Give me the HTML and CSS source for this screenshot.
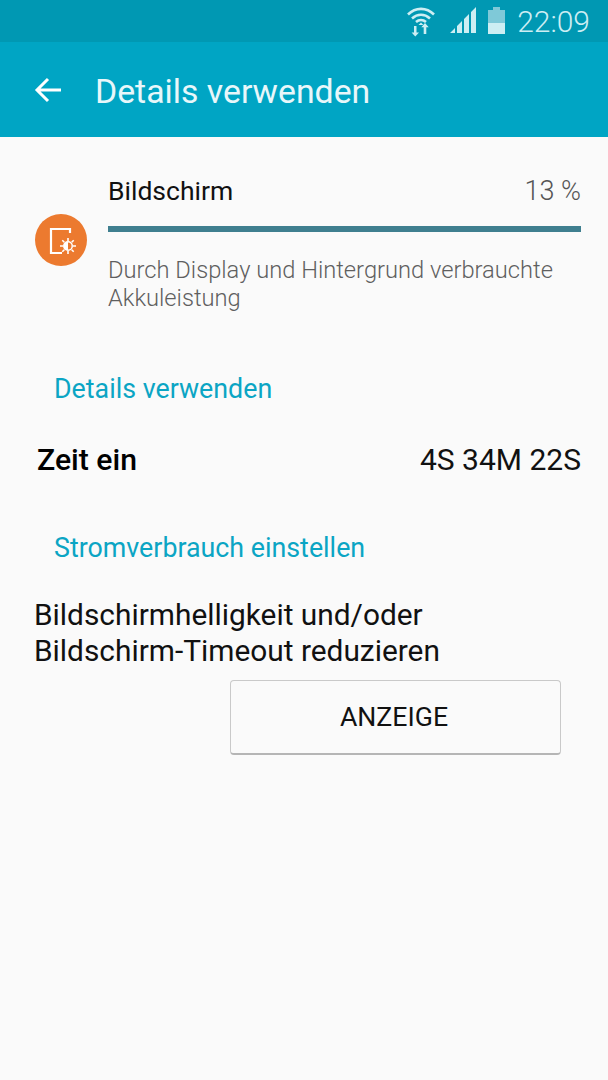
FILE: index.html
```html
<!DOCTYPE html>
<html>
<head>
  <meta charset="UTF-8">
  <link rel="stylesheet" href="styles.css">
</head>
<body>
  <div class="status-bar">
    <svg class="wifi" width="30" height="34" viewBox="0 0 30 34">
      <path d="M2 11.500C9.500 4 20.500 4 28 11.500M6 15.500C11.500 10.500 18.500 10.500 24 15.500M10 19C13 16.500 17 16.500 20 19" fill="none" stroke="#cdeef3" stroke-width="2.600"/>
      <path d="M15 19.500l2.500 2.500h-5z" fill="#cdeef3"/>
      <path d="M10.500 23v6.500h2.500l-3.700 4-3.700-4h2.400V23zM19 20l3.700 4.200h-2.400V31h-2.600v-6.800h-2.400z" fill="#cdeef3"/>
    </svg>
    <svg class="signal" width="27" height="27" viewBox="0 0 27 27">
      <path d="M0 26l5-5v5zM7 26v-7l5-5v12zM14 26V12l5-5v19zM21 26V5l5-5v26z" fill="#cdeef3"/>
    </svg>
    <div class="battery">
      <div class="battery-cap"></div>
      <div class="battery-body"><div class="battery-level"></div></div>
    </div>
    <span class="clock">22:09</span>
  </div>

  <div class="toolbar">
    <svg class="back" width="28" height="26" viewBox="0 0 28 26">
      <path d="M27 13H3M14 2L3 13l11 11" fill="none" stroke="#ffffff" stroke-width="3"/>
    </svg>
    <span class="toolbar-title">Details verwenden</span>
  </div>

  <div class="usage">
    <div class="usage-icon">
      <svg width="52" height="52" viewBox="0 0 52 52">
        <path d="M35 19v-4H16v24h11" fill="none" stroke="#ffffff" stroke-width="2.200"/>
        <circle cx="33" cy="32" r="5" fill="#ffffff"/>
        <path d="M33 28.500a3.500 3.500 0 0 1 0 7z" fill="#ec7a2f"/>
        <path d="M33 24v3M33 37v3M25 32h3M38 32h3M27.300 26.300l2 2M36.700 35.700l2 2M38.700 26.300l-2 2M29.300 35.700l-2 2" stroke="#ffffff" stroke-width="1.600"/>
      </svg>
    </div>
    <div class="usage-main">
      <div class="usage-head">
        <span class="usage-name">Bildschirm</span>
        <span class="usage-pct">13 %</span>
      </div>
      <div class="usage-bar"></div>
      <div class="usage-desc">Durch Display und Hintergrund verbrauchte Akkuleistung</div>
    </div>
  </div>

  <div class="section-title">Details verwenden</div>
  <div class="time-row">
    <span class="time-label">Zeit ein</span>
    <span class="time-value">4S 34M 22S</span>
  </div>

  <div class="section-title section-power">Stromverbrauch einstellen</div>
  <div class="tip">Bildschirmhelligkeit und/oder<br>Bildschirm-Timeout reduzieren</div>
  <div class="tip-action">
    <button class="button">ANZEIGE</button>
  </div>
</body>
</html>
```

FILE: styles.css
```css
* {
  margin: 0;
  padding: 0;
  box-sizing: border-box;
}

body {
  width: 608px;
  height: 1080px;
  overflow: hidden;
  font-family: Roboto, sans-serif;
  background: #fafafa;
  color: #000000;
}

.status-bar {
  display: flex;
  align-items: center;
  justify-content: flex-end;
  height: 42px;
  padding-right: 18px;
  background: #0098b3;
}

.wifi {
  margin-right: 14px;
  margin-top: -2px;
}

.signal {
  margin-right: 11px;
  margin-top: -1px;
}

.battery {
  width: 17px;
  margin-right: 12px;
  margin-top: -1px;
}

.battery-cap {
  width: 7px;
  height: 3px;
  margin: 0 auto;
  background: #7fc9d8;
}

.battery-body {
  display: flex;
  align-items: flex-end;
  height: 24px;
  background: #7fc9d8;
}

.battery-level {
  width: 100%;
  height: 11px;
  background: #cdeef3;
}

.clock {
  font-size: 30px;
  font-weight: 300;
  color: #cdeef3;
}

.toolbar {
  display: flex;
  align-items: center;
  height: 95px;
  padding-left: 34px;
  background: #00a5c4;
}

.back {
  margin-right: 33px;
}

.toolbar-title {
  font-size: 33.800px;
  color: #e8f7fa;
  margin-top: 4px;
}

.usage {
  display: flex;
  align-items: center;
  padding: 38px 27px 0 35px;
}

.usage-icon {
  width: 52px;
  height: 52px;
  margin-right: 21px;
  margin-top: -7px;
  border-radius: 50%;
  background: #ec7a2f;
}

.usage-main {
  flex: 1;
}

.usage-head {
  display: flex;
  justify-content: space-between;
  align-items: baseline;
  height: 36px;
}

.usage-name {
  font-size: 26.500px;
  color: #111111;
}

.usage-pct {
  font-size: 27px;
  font-weight: 300;
  color: #555555;
}

.usage-bar {
  height: 6px;
  margin-top: 15px;
  background: #3f7f8f;
}

.usage-desc {
  width: 470px;
  margin-top: 25px;
  font-size: 23.700px;
  line-height: 27.500px;
  font-weight: 300;
  color: #5f5f5f;
}

.section-title {
  padding-left: 54px;
  margin-top: 60px;
  font-size: 26.800px;
  line-height: 34px;
  color: #0ba5c4;
}

.section-power {
  margin-top: 54px;
}

.time-row {
  display: flex;
  justify-content: space-between;
  align-items: center;
  height: 36px;
  margin-top: 35px;
  padding: 0 27px 0 37px;
}

.time-label {
  font-size: 30.200px;
  font-weight: 500;
}

.time-value {
  font-size: 30px;
  color: #111111;
}

.tip {
  margin-top: 32px;
  padding-left: 34px;
  font-size: 29.850px;
  line-height: 36px;
  color: #111111;
}

.tip-action {
  display: flex;
  justify-content: flex-end;
  margin-top: 11px;
  padding-right: 47px;
}

.button {
  width: 331px;
  height: 75px;
  padding-right: 3px;
  border: 1px solid #c9c9c9;
  border-bottom: 2px solid #b5b5b5;
  border-radius: 4px;
  background: #fafafa;
  font-family: Roboto, sans-serif;
  font-size: 26.700px;
  color: #111111;
}
```
